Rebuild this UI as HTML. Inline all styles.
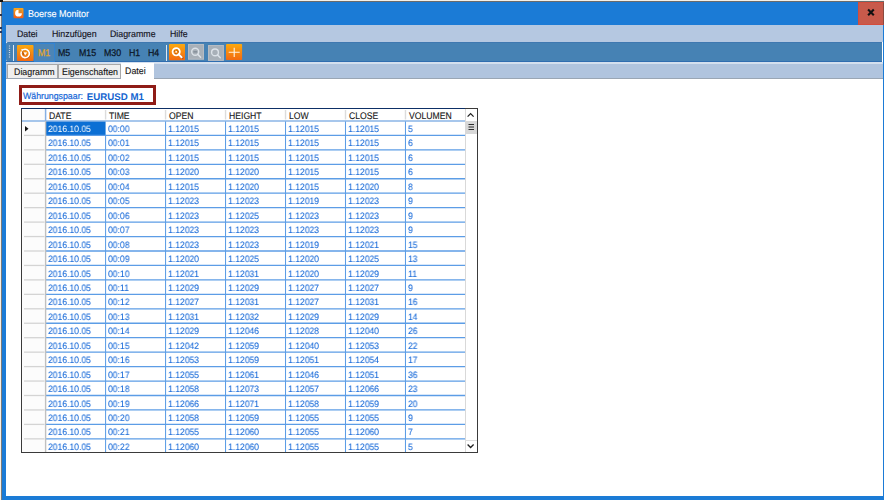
<!DOCTYPE html>
<html><head><meta charset="utf-8"><style>
html,body{margin:0;padding:0}
body{width:884px;height:500px;overflow:hidden;position:relative;background:#fff;font-family:"Liberation Sans",sans-serif;text-rendering:geometricPrecision}
.a{position:absolute}
#topstrip{left:0;top:0;width:884px;height:2px;background:#f4efe8}
#topline{left:1px;top:1px;width:883px;height:1px;background:#6b6b6b}
#corner{left:0;top:0;width:3px;height:2px;background:#111}
#leftstrip{left:0;top:0;width:2px;height:500px;background:#f5efe6}
#leftline{left:1px;top:1px;width:1px;height:499px;background:#7a7a7a}
#win{left:2px;top:2px;width:882px;height:498px;background:#1b7bd6}
#title{left:28px;top:8.6px;color:#fff;-webkit-text-stroke:0.1px #fff;font-size:9.7px;line-height:12px;white-space:nowrap;transform:scaleX(0.93);transform-origin:0 0}
#ticon{left:14px;top:8px;width:10px;height:10px;background:linear-gradient(#f79a2a,#f0641a);border-radius:1px}
#close{left:858px;top:2px;width:26px;height:23px;background:#c85a4b;box-sizing:border-box;border:1px solid #d44c3c;border-right-color:#8a4a40}
#client{left:6px;top:25px;width:877px;height:471px;background:#fff}
#menubar{left:6px;top:25px;width:877px;height:17px;background:#b5c8e1}
.menu{top:28.3px;font-size:9.4px;line-height:12px;color:#15151f;-webkit-text-stroke:0.15px #15151f;white-space:nowrap;transform:scaleX(0.94);transform-origin:0 0}
#toolbar{left:6px;top:42px;width:876px;height:20px;background:#4682b4;border-radius:3px 0 0 3px;box-shadow:inset 0 1px 0 #3f78b0}
#tstrip{left:6px;top:62px;width:877px;height:2px;background:#d3dfee}
#tabbg{left:6px;top:64px;width:877px;height:15px;background:#b0c4de}
#tabline{left:6px;top:78px;width:877px;height:1px;background:#9aa6b4}
.tab{top:64px;height:14px;background:#efefef;box-sizing:border-box;border:1px solid #a8a8a8;border-bottom:none}
.tabt{font-size:9.3px;line-height:12px;color:#161616;-webkit-text-stroke:0.12px #161616;white-space:nowrap;transform:scaleX(0.95);transform-origin:0 0}
#seltab{left:121px;top:63px;width:33px;height:17px;background:#fff}
.tb{top:49.1px;font-size:9.7px;text-rendering:geometricPrecision;line-height:10px;color:#0c1626;white-space:nowrap;font-weight:normal;-webkit-text-stroke:0.25px currentColor;transform:scaleX(0.91);transform-origin:0 0}
.btn{top:44px;width:16px;height:16px;border-radius:1px}
.orange{background:linear-gradient(#fca21c,#f26a10)}
.gray{background:#a3aebb}
#m1box{left:33.5px;top:42.5px;width:21.5px;height:19px;box-sizing:border-box;border:1.3px solid #3384d4;background:#4c85b6}
#redbox{left:19px;top:85px;width:137px;height:20px;box-sizing:border-box;border:3px solid #8f1c17;background:#fff}
#lbl{left:23px;top:91px;transform:scaleX(0.955);transform-origin:0 0;font-size:9.2px;line-height:10px;color:#1868d8;-webkit-text-stroke:0.22px #1868d8;white-space:nowrap}
#lblb{position:absolute;left:86.8px;top:92.8px;font-size:9.7px;line-height:10px;white-space:nowrap}
#lblb{font-weight:bold;color:#1464d0}
#grid{left:21px;top:108px;width:457px;height:345px;box-sizing:border-box;border:1px solid #3a3a3a;background:#fff}
#gtop{left:21px;top:108px;width:444px;height:1px;background:#0d2f66}
#rowhdr{left:22px;top:109px;width:23px;height:343px;background:#fcfcfc}
#hdrbg{left:46px;top:109px;width:419px;height:12px;background:#fff}
#hdrline{left:22px;top:120px;width:443px;height:2px;background:#9cc0ea}
#rhsep{left:45px;top:109px;width:1px;height:12px;background:#8ab4e6}
#rhsep2{left:45px;top:121px;width:1px;height:331px;background:#c4c4c4}
.hl{position:absolute;left:46px;width:419px;height:1px;background:#6aa2e2}
.rhl{position:absolute;left:24px;width:21px;height:1px;background:#dcdcdc}
.vl{position:absolute;top:121px;width:1px;height:331px;background:#6aa2e2}
.hsep{position:absolute;top:110px;width:1px;height:10px;background:#e2e2e2}
.hd{position:absolute;top:111.6px;transform:scaleX(0.90);transform-origin:0 0;font-size:9.6px;line-height:10px;color:#161616;-webkit-text-stroke:0.12px #161616;white-space:nowrap}
.cell{position:absolute;will-change:transform;transform:scaleX(0.935);transform-origin:0 0;font-size:9.2px;line-height:10px;color:#1b6cd9;-webkit-text-stroke:0.1px #1b6cd9;white-space:nowrap}
.cell.sel{color:#fff;-webkit-text-stroke:0px #fff}
.selbg{position:absolute;background:#0c6fd4}
#sbar{left:465px;top:109px;width:12px;height:343px;background:#fff;border-left:1px solid #d9d9d9;box-sizing:border-box}
#sthumb{left:465px;top:121px;width:12px;height:13px;background:#d8d8d8}

#tbline{left:6px;top:61px;width:876px;height:1px;background:#2f6db0}

</style></head><body>
<div class="a" id="topstrip"></div>
<div class="a" id="leftstrip"></div>
<div class="a" id="win"></div>
<div class="a" id="topline"></div>
<div class="a" id="leftline"></div>
<div class="a" id="corner"></div>
<div class="a" style="left:0;top:14px;width:2px;height:2px;background:#2a3550"></div>
<div class="a" style="left:0;top:27px;width:2px;height:2px;background:#243a66"></div>
<div class="a" style="left:0;top:31px;width:2px;height:2px;background:#243a66"></div>
<svg class="a" style="left:13px;top:8px" width="11" height="11" viewBox="0 0 11 11">
<defs><linearGradient id="go" x1="0" y1="0" x2="0" y2="1"><stop offset="0" stop-color="#f9a81c"/><stop offset="1" stop-color="#f25a12"/></linearGradient></defs>
<rect x="0.5" y="0" width="10" height="10.3" rx="1" fill="url(#go)"/>
<path d="M5.5 5.2 L5.5 1.8 A3.4 3.4 0 1 0 8.9 5.2 Z" fill="#fff"/>
<rect x="6.2" y="1.9" width="2.4" height="2.4" fill="#c98a3a"/>
</svg>
<div class="a" id="title">Boerse Monitor</div>
<div class="a" id="close"><svg width="24" height="21" style="position:absolute;left:0;top:0"><path d="M9.1 6.5 L14.8 12.2 M14.8 6.5 L9.1 12.2" stroke="#111" stroke-width="2.1"/></svg></div>
<div class="a" id="client"></div>
<div class="a" id="menubar"></div>
<div class="a menu" style="left:17px">Datei</div>
<div class="a menu" style="left:51.5px">Hinzufügen</div>
<div class="a menu" style="left:110px">Diagramme</div>
<div class="a menu" style="left:170px">Hilfe</div>
<div class="a" id="toolbar"></div>
<div class="a" id="tbline"></div>
<svg class="a" style="left:8px;top:45px" width="3" height="14"><path d="M1.5 0.5 V13.5" stroke="#c9d8ea" stroke-width="1.2" stroke-dasharray="1 1.2"/></svg>
<div class="a" style="left:13px;top:45px;width:1px;height:16px;background:#dfe8f2"></div>
<div class="a" id="m1box"></div>
<svg class="a" style="left:16.5px;top:44.5px" width="17" height="16" viewBox="0 0 17 16">
<defs><linearGradient id="go2" x1="0" y1="0" x2="0" y2="1"><stop offset="0" stop-color="#fca90e"/><stop offset="1" stop-color="#f26912"/></linearGradient></defs>
<rect x="0" y="0" width="16.5" height="16" rx="1" fill="url(#go2)"/>
<circle cx="8.7" cy="9" r="4.2" fill="none" stroke="#7a2e08" stroke-opacity="0.35" stroke-width="1.6"/>
<path d="M6.1 4.86 A4.2 4.2 0 1 1 4.56 6.4" fill="none" stroke="#fff" stroke-width="1.6"/>
<path d="M4.3 4.0 L7.0 4.3 L4.8 6.8 Z" fill="#fff"/>
<path d="M5.6 7.2 L7.2 10.2" stroke="#8a3208" stroke-opacity="0.6" stroke-width="1.2"/>
<path d="M6.6 7.3 L10.2 7.6 L8.1 10.6 Z" fill="#fff"/>
</svg>
<div class="a tb" style="left:38px;color:#e2a52c">M1</div>
<div class="a tb" style="left:58px">M5</div>
<div class="a tb" style="left:79px">M15</div>
<div class="a tb" style="left:103.8px">M30</div>
<div class="a tb" style="left:129px">H1</div>
<div class="a tb" style="left:148px">H4</div>
<div class="a" style="left:166px;top:45px;width:1px;height:16px;background:#dfe8f2"></div>
<svg class="a" style="left:168.8px;top:44.2px" width="16.5" height="16.5" viewBox="0 0 16.5 16.5">
<defs><linearGradient id="go3" x1="0" y1="0" x2="0" y2="1"><stop offset="0" stop-color="#fca90e"/><stop offset="1" stop-color="#f26912"/></linearGradient></defs>
<rect x="0" y="0" width="16.2" height="16.3" rx="1" fill="url(#go3)"/>
<path d="M9.8 10.2 L12.8 13.3" stroke="#6a2a08" stroke-opacity="0.4" stroke-width="2.2" stroke-linecap="round" transform="translate(0.7,0.7)"/>
<circle cx="7.2" cy="7.8" r="3.6" fill="none" stroke="#fff" stroke-width="1.8"/>
<path d="M9.8 10.4 L12.6 13.2" stroke="#fff" stroke-width="2" stroke-linecap="round"/>
<circle cx="7.2" cy="7.8" r="2" fill="none" stroke="#8a3a0a" stroke-opacity="0.7" stroke-width="1" stroke-dasharray="1.2 1.94" transform="rotate(-20 7.2 7.8)"/>
<circle cx="7.2" cy="7.8" r="0.9" fill="#fff"/>
</svg>
<svg class="a" style="left:187.8px;top:44.3px" width="16.5" height="16" viewBox="0 0 16.5 16">
<rect x="0" y="0" width="16" height="15.6" fill="#a8b0b8"/>
<rect x="0.5" y="0.5" width="15" height="14.6" fill="none" stroke="#b6bcc3" stroke-width="1"/>
<circle cx="7.2" cy="7.8" r="3.5" fill="none" stroke="#dce2e8" stroke-width="1.4"/>
<path d="M5.4 7.8 H9" stroke="#88929c" stroke-width="1.7"/>
<path d="M9.8 10.4 L12.6 13.2" stroke="#dce2e8" stroke-width="1.5" stroke-linecap="round"/>
</svg>
<svg class="a" style="left:207.5px;top:44.5px" width="16.5" height="16" viewBox="0 0 16.5 16">
<rect x="0" y="0" width="15.8" height="15.8" fill="#a8b0b8"/>
<rect x="0.5" y="0.5" width="14.8" height="14.8" fill="none" stroke="#b6bcc3" stroke-width="1"/>
<circle cx="7" cy="7.4" r="3.4" fill="none" stroke="#dce2e8" stroke-width="1.4"/>
<path d="M9.5 9.9 L12.3 12.8" stroke="#dce2e8" stroke-width="1.5" stroke-linecap="round"/>
</svg>
<svg class="a" style="left:226.3px;top:44.3px" width="16.5" height="16.5" viewBox="0 0 16.5 16.5">
<defs><linearGradient id="go4" x1="0" y1="0" x2="0" y2="1"><stop offset="0" stop-color="#fca90e"/><stop offset="1" stop-color="#f26912"/></linearGradient></defs>
<rect x="0" y="0" width="16.1" height="16.1" rx="1" fill="url(#go4)"/>
<path d="M2.7 8.2 H13.7 M8.2 3.7 V13" stroke="#fff" stroke-opacity="0.9" stroke-width="1.1"/>
</svg>
<div class="a" id="tstrip"></div>
<div class="a" id="tabbg"></div>
<div class="a" id="tabline"></div>
<div class="a tab" style="left:7px;width:51px"></div>
<div class="a tabt" style="left:13.5px;top:65.8px">Diagramm</div>
<div class="a tab" style="left:58px;width:63px"></div>
<div class="a tabt" style="left:62px;top:65.8px">Eigenschaften</div>
<div class="a" id="seltab"></div>
<div class="a tabt" style="left:125px;top:64.8px">Datei</div>
<div class="a" id="redbox"></div>
<div class="a" id="lbl">Währungspaar:</div><div id="lblb">EURUSD M1</div>
<div class="a" id="grid"></div>
<div class="a" id="gtop"></div>
<div class="a" id="rowhdr"></div>
<div class="a" id="hdrbg"></div>
<div class="a" id="sbar"></div>
<div class="a" id="sthumb"></div>
<svg class="a" style="left:465px;top:109px" width="12" height="343" viewBox="0 0 12 343">
<path d="M2.6 7.6 L5.6 4.6 L8.6 7.6" fill="none" stroke="#222" stroke-width="1.3"/>
<path d="M3.5 15.5 H9 M3.5 18 H9 M3.5 20.5 H9" stroke="#1a1a1a" stroke-width="0.9"/>
<rect x="0" y="331" width="12" height="1" fill="#dedede"/>
<path d="M2.6 335.5 L5.6 338.5 L8.6 335.5" fill="none" stroke="#222" stroke-width="1.3"/>
</svg>
<svg class="a" style="left:24px;top:125px" width="6" height="8"><path d="M1 1 L4.5 3.8 L1 6.6 Z" fill="#111"/></svg>
<svg class="a" style="left:0;top:0" width="884" height="500" viewBox="0 0 884 500">
<rect x="46" y="121" width="59.58" height="14.40" fill="#0c6fd4"/>
<line x1="46" y1="135.40" x2="465" y2="135.40" stroke="#5c9de6" stroke-width="1.3"/>
<line x1="24" y1="135.40" x2="44.5" y2="135.40" stroke="#d4d4d4" stroke-width="1.3"/>
<line x1="46" y1="149.85" x2="465" y2="149.85" stroke="#5c9de6" stroke-width="1.3"/>
<line x1="24" y1="149.85" x2="44.5" y2="149.85" stroke="#d4d4d4" stroke-width="1.3"/>
<line x1="46" y1="164.30" x2="465" y2="164.30" stroke="#5c9de6" stroke-width="1.3"/>
<line x1="24" y1="164.30" x2="44.5" y2="164.30" stroke="#d4d4d4" stroke-width="1.3"/>
<line x1="46" y1="178.75" x2="465" y2="178.75" stroke="#5c9de6" stroke-width="1.3"/>
<line x1="24" y1="178.75" x2="44.5" y2="178.75" stroke="#d4d4d4" stroke-width="1.3"/>
<line x1="46" y1="193.20" x2="465" y2="193.20" stroke="#5c9de6" stroke-width="1.3"/>
<line x1="24" y1="193.20" x2="44.5" y2="193.20" stroke="#d4d4d4" stroke-width="1.3"/>
<line x1="46" y1="207.65" x2="465" y2="207.65" stroke="#5c9de6" stroke-width="1.3"/>
<line x1="24" y1="207.65" x2="44.5" y2="207.65" stroke="#d4d4d4" stroke-width="1.3"/>
<line x1="46" y1="222.10" x2="465" y2="222.10" stroke="#5c9de6" stroke-width="1.3"/>
<line x1="24" y1="222.10" x2="44.5" y2="222.10" stroke="#d4d4d4" stroke-width="1.3"/>
<line x1="46" y1="236.55" x2="465" y2="236.55" stroke="#5c9de6" stroke-width="1.3"/>
<line x1="24" y1="236.55" x2="44.5" y2="236.55" stroke="#d4d4d4" stroke-width="1.3"/>
<line x1="46" y1="251.00" x2="465" y2="251.00" stroke="#5c9de6" stroke-width="1.3"/>
<line x1="24" y1="251.00" x2="44.5" y2="251.00" stroke="#d4d4d4" stroke-width="1.3"/>
<line x1="46" y1="265.45" x2="465" y2="265.45" stroke="#5c9de6" stroke-width="1.3"/>
<line x1="24" y1="265.45" x2="44.5" y2="265.45" stroke="#d4d4d4" stroke-width="1.3"/>
<line x1="46" y1="279.90" x2="465" y2="279.90" stroke="#5c9de6" stroke-width="1.3"/>
<line x1="24" y1="279.90" x2="44.5" y2="279.90" stroke="#d4d4d4" stroke-width="1.3"/>
<line x1="46" y1="294.35" x2="465" y2="294.35" stroke="#5c9de6" stroke-width="1.3"/>
<line x1="24" y1="294.35" x2="44.5" y2="294.35" stroke="#d4d4d4" stroke-width="1.3"/>
<line x1="46" y1="308.80" x2="465" y2="308.80" stroke="#5c9de6" stroke-width="1.3"/>
<line x1="24" y1="308.80" x2="44.5" y2="308.80" stroke="#d4d4d4" stroke-width="1.3"/>
<line x1="46" y1="323.25" x2="465" y2="323.25" stroke="#5c9de6" stroke-width="1.3"/>
<line x1="24" y1="323.25" x2="44.5" y2="323.25" stroke="#d4d4d4" stroke-width="1.3"/>
<line x1="46" y1="337.70" x2="465" y2="337.70" stroke="#5c9de6" stroke-width="1.3"/>
<line x1="24" y1="337.70" x2="44.5" y2="337.70" stroke="#d4d4d4" stroke-width="1.3"/>
<line x1="46" y1="352.15" x2="465" y2="352.15" stroke="#5c9de6" stroke-width="1.3"/>
<line x1="24" y1="352.15" x2="44.5" y2="352.15" stroke="#d4d4d4" stroke-width="1.3"/>
<line x1="46" y1="366.60" x2="465" y2="366.60" stroke="#5c9de6" stroke-width="1.3"/>
<line x1="24" y1="366.60" x2="44.5" y2="366.60" stroke="#d4d4d4" stroke-width="1.3"/>
<line x1="46" y1="381.05" x2="465" y2="381.05" stroke="#5c9de6" stroke-width="1.3"/>
<line x1="24" y1="381.05" x2="44.5" y2="381.05" stroke="#d4d4d4" stroke-width="1.3"/>
<line x1="46" y1="395.50" x2="465" y2="395.50" stroke="#5c9de6" stroke-width="1.3"/>
<line x1="24" y1="395.50" x2="44.5" y2="395.50" stroke="#d4d4d4" stroke-width="1.3"/>
<line x1="46" y1="409.95" x2="465" y2="409.95" stroke="#5c9de6" stroke-width="1.3"/>
<line x1="24" y1="409.95" x2="44.5" y2="409.95" stroke="#d4d4d4" stroke-width="1.3"/>
<line x1="46" y1="424.40" x2="465" y2="424.40" stroke="#5c9de6" stroke-width="1.3"/>
<line x1="24" y1="424.40" x2="44.5" y2="424.40" stroke="#d4d4d4" stroke-width="1.3"/>
<line x1="46" y1="438.85" x2="465" y2="438.85" stroke="#5c9de6" stroke-width="1.3"/>
<line x1="24" y1="438.85" x2="44.5" y2="438.85" stroke="#d4d4d4" stroke-width="1.3"/>
<line x1="105.58" y1="135.4" x2="105.58" y2="452" stroke="#5c9de6" stroke-width="1.05"/>
<line x1="105.58" y1="110" x2="105.58" y2="119.5" stroke="#dcdcdc" stroke-width="1.4"/>
<line x1="165.56" y1="121" x2="165.56" y2="452" stroke="#5c9de6" stroke-width="1.05"/>
<line x1="165.56" y1="110" x2="165.56" y2="119.5" stroke="#dcdcdc" stroke-width="1.4"/>
<line x1="225.54" y1="121" x2="225.54" y2="452" stroke="#5c9de6" stroke-width="1.05"/>
<line x1="225.54" y1="110" x2="225.54" y2="119.5" stroke="#dcdcdc" stroke-width="1.4"/>
<line x1="285.52" y1="121" x2="285.52" y2="452" stroke="#5c9de6" stroke-width="1.05"/>
<line x1="285.52" y1="110" x2="285.52" y2="119.5" stroke="#dcdcdc" stroke-width="1.4"/>
<line x1="345.50" y1="121" x2="345.50" y2="452" stroke="#5c9de6" stroke-width="1.05"/>
<line x1="345.50" y1="110" x2="345.50" y2="119.5" stroke="#dcdcdc" stroke-width="1.4"/>
<line x1="405.48" y1="121" x2="405.48" y2="452" stroke="#5c9de6" stroke-width="1.05"/>
<line x1="405.48" y1="110" x2="405.48" y2="119.5" stroke="#dcdcdc" stroke-width="1.4"/>
<line x1="22" y1="121" x2="465" y2="121" stroke="#8ab4e6" stroke-width="1.3"/>
<line x1="45.60" y1="109" x2="45.60" y2="121" stroke="#86b0e4" stroke-width="1.5"/>
<line x1="45.60" y1="121" x2="45.60" y2="452" stroke="#c0c0c0" stroke-width="1.4"/>
</svg>
<div class="hd" style="left:49.10px">DATE</div>
<div class="hd" style="left:109.08px">TIME</div>
<div class="hd" style="left:169.06px">OPEN</div>
<div class="hd" style="left:229.04px">HEIGHT</div>
<div class="hd" style="left:289.02px">LOW</div>
<div class="hd" style="left:349.00px">CLOSE</div>
<div class="hd" style="left:408.98px">VOLUMEN</div>
<div class="cell sel" style="left:48.10px;top:124.00px">2016.10.05</div>
<div class="cell" style="left:108.08px;top:124.00px">00:00</div>
<div class="cell" style="left:168.06px;top:124.00px">1.12015</div>
<div class="cell" style="left:228.04px;top:124.00px">1.12015</div>
<div class="cell" style="left:288.02px;top:124.00px">1.12015</div>
<div class="cell" style="left:348.00px;top:124.00px">1.12015</div>
<div class="cell" style="left:407.98px;top:124.00px">5</div>
<div class="cell" style="left:48.10px;top:138.45px">2016.10.05</div>
<div class="cell" style="left:108.08px;top:138.45px">00:01</div>
<div class="cell" style="left:168.06px;top:138.45px">1.12015</div>
<div class="cell" style="left:228.04px;top:138.45px">1.12015</div>
<div class="cell" style="left:288.02px;top:138.45px">1.12015</div>
<div class="cell" style="left:348.00px;top:138.45px">1.12015</div>
<div class="cell" style="left:407.98px;top:138.45px">6</div>
<div class="cell" style="left:48.10px;top:152.90px">2016.10.05</div>
<div class="cell" style="left:108.08px;top:152.90px">00:02</div>
<div class="cell" style="left:168.06px;top:152.90px">1.12015</div>
<div class="cell" style="left:228.04px;top:152.90px">1.12015</div>
<div class="cell" style="left:288.02px;top:152.90px">1.12015</div>
<div class="cell" style="left:348.00px;top:152.90px">1.12015</div>
<div class="cell" style="left:407.98px;top:152.90px">6</div>
<div class="cell" style="left:48.10px;top:167.35px">2016.10.05</div>
<div class="cell" style="left:108.08px;top:167.35px">00:03</div>
<div class="cell" style="left:168.06px;top:167.35px">1.12020</div>
<div class="cell" style="left:228.04px;top:167.35px">1.12020</div>
<div class="cell" style="left:288.02px;top:167.35px">1.12015</div>
<div class="cell" style="left:348.00px;top:167.35px">1.12015</div>
<div class="cell" style="left:407.98px;top:167.35px">6</div>
<div class="cell" style="left:48.10px;top:181.80px">2016.10.05</div>
<div class="cell" style="left:108.08px;top:181.80px">00:04</div>
<div class="cell" style="left:168.06px;top:181.80px">1.12015</div>
<div class="cell" style="left:228.04px;top:181.80px">1.12020</div>
<div class="cell" style="left:288.02px;top:181.80px">1.12015</div>
<div class="cell" style="left:348.00px;top:181.80px">1.12020</div>
<div class="cell" style="left:407.98px;top:181.80px">8</div>
<div class="cell" style="left:48.10px;top:196.25px">2016.10.05</div>
<div class="cell" style="left:108.08px;top:196.25px">00:05</div>
<div class="cell" style="left:168.06px;top:196.25px">1.12023</div>
<div class="cell" style="left:228.04px;top:196.25px">1.12023</div>
<div class="cell" style="left:288.02px;top:196.25px">1.12019</div>
<div class="cell" style="left:348.00px;top:196.25px">1.12023</div>
<div class="cell" style="left:407.98px;top:196.25px">9</div>
<div class="cell" style="left:48.10px;top:210.70px">2016.10.05</div>
<div class="cell" style="left:108.08px;top:210.70px">00:06</div>
<div class="cell" style="left:168.06px;top:210.70px">1.12023</div>
<div class="cell" style="left:228.04px;top:210.70px">1.12025</div>
<div class="cell" style="left:288.02px;top:210.70px">1.12023</div>
<div class="cell" style="left:348.00px;top:210.70px">1.12023</div>
<div class="cell" style="left:407.98px;top:210.70px">9</div>
<div class="cell" style="left:48.10px;top:225.15px">2016.10.05</div>
<div class="cell" style="left:108.08px;top:225.15px">00:07</div>
<div class="cell" style="left:168.06px;top:225.15px">1.12023</div>
<div class="cell" style="left:228.04px;top:225.15px">1.12023</div>
<div class="cell" style="left:288.02px;top:225.15px">1.12023</div>
<div class="cell" style="left:348.00px;top:225.15px">1.12023</div>
<div class="cell" style="left:407.98px;top:225.15px">9</div>
<div class="cell" style="left:48.10px;top:239.60px">2016.10.05</div>
<div class="cell" style="left:108.08px;top:239.60px">00:08</div>
<div class="cell" style="left:168.06px;top:239.60px">1.12023</div>
<div class="cell" style="left:228.04px;top:239.60px">1.12023</div>
<div class="cell" style="left:288.02px;top:239.60px">1.12019</div>
<div class="cell" style="left:348.00px;top:239.60px">1.12021</div>
<div class="cell" style="left:407.98px;top:239.60px">15</div>
<div class="cell" style="left:48.10px;top:254.05px">2016.10.05</div>
<div class="cell" style="left:108.08px;top:254.05px">00:09</div>
<div class="cell" style="left:168.06px;top:254.05px">1.12020</div>
<div class="cell" style="left:228.04px;top:254.05px">1.12025</div>
<div class="cell" style="left:288.02px;top:254.05px">1.12020</div>
<div class="cell" style="left:348.00px;top:254.05px">1.12025</div>
<div class="cell" style="left:407.98px;top:254.05px">13</div>
<div class="cell" style="left:48.10px;top:268.50px">2016.10.05</div>
<div class="cell" style="left:108.08px;top:268.50px">00:10</div>
<div class="cell" style="left:168.06px;top:268.50px">1.12021</div>
<div class="cell" style="left:228.04px;top:268.50px">1.12031</div>
<div class="cell" style="left:288.02px;top:268.50px">1.12020</div>
<div class="cell" style="left:348.00px;top:268.50px">1.12029</div>
<div class="cell" style="left:407.98px;top:268.50px">11</div>
<div class="cell" style="left:48.10px;top:282.95px">2016.10.05</div>
<div class="cell" style="left:108.08px;top:282.95px">00:11</div>
<div class="cell" style="left:168.06px;top:282.95px">1.12029</div>
<div class="cell" style="left:228.04px;top:282.95px">1.12029</div>
<div class="cell" style="left:288.02px;top:282.95px">1.12027</div>
<div class="cell" style="left:348.00px;top:282.95px">1.12027</div>
<div class="cell" style="left:407.98px;top:282.95px">9</div>
<div class="cell" style="left:48.10px;top:297.40px">2016.10.05</div>
<div class="cell" style="left:108.08px;top:297.40px">00:12</div>
<div class="cell" style="left:168.06px;top:297.40px">1.12027</div>
<div class="cell" style="left:228.04px;top:297.40px">1.12031</div>
<div class="cell" style="left:288.02px;top:297.40px">1.12027</div>
<div class="cell" style="left:348.00px;top:297.40px">1.12031</div>
<div class="cell" style="left:407.98px;top:297.40px">16</div>
<div class="cell" style="left:48.10px;top:311.85px">2016.10.05</div>
<div class="cell" style="left:108.08px;top:311.85px">00:13</div>
<div class="cell" style="left:168.06px;top:311.85px">1.12031</div>
<div class="cell" style="left:228.04px;top:311.85px">1.12032</div>
<div class="cell" style="left:288.02px;top:311.85px">1.12029</div>
<div class="cell" style="left:348.00px;top:311.85px">1.12029</div>
<div class="cell" style="left:407.98px;top:311.85px">14</div>
<div class="cell" style="left:48.10px;top:326.30px">2016.10.05</div>
<div class="cell" style="left:108.08px;top:326.30px">00:14</div>
<div class="cell" style="left:168.06px;top:326.30px">1.12029</div>
<div class="cell" style="left:228.04px;top:326.30px">1.12046</div>
<div class="cell" style="left:288.02px;top:326.30px">1.12028</div>
<div class="cell" style="left:348.00px;top:326.30px">1.12040</div>
<div class="cell" style="left:407.98px;top:326.30px">26</div>
<div class="cell" style="left:48.10px;top:340.75px">2016.10.05</div>
<div class="cell" style="left:108.08px;top:340.75px">00:15</div>
<div class="cell" style="left:168.06px;top:340.75px">1.12042</div>
<div class="cell" style="left:228.04px;top:340.75px">1.12059</div>
<div class="cell" style="left:288.02px;top:340.75px">1.12040</div>
<div class="cell" style="left:348.00px;top:340.75px">1.12053</div>
<div class="cell" style="left:407.98px;top:340.75px">22</div>
<div class="cell" style="left:48.10px;top:355.20px">2016.10.05</div>
<div class="cell" style="left:108.08px;top:355.20px">00:16</div>
<div class="cell" style="left:168.06px;top:355.20px">1.12053</div>
<div class="cell" style="left:228.04px;top:355.20px">1.12059</div>
<div class="cell" style="left:288.02px;top:355.20px">1.12051</div>
<div class="cell" style="left:348.00px;top:355.20px">1.12054</div>
<div class="cell" style="left:407.98px;top:355.20px">17</div>
<div class="cell" style="left:48.10px;top:369.65px">2016.10.05</div>
<div class="cell" style="left:108.08px;top:369.65px">00:17</div>
<div class="cell" style="left:168.06px;top:369.65px">1.12055</div>
<div class="cell" style="left:228.04px;top:369.65px">1.12061</div>
<div class="cell" style="left:288.02px;top:369.65px">1.12046</div>
<div class="cell" style="left:348.00px;top:369.65px">1.12051</div>
<div class="cell" style="left:407.98px;top:369.65px">36</div>
<div class="cell" style="left:48.10px;top:384.10px">2016.10.05</div>
<div class="cell" style="left:108.08px;top:384.10px">00:18</div>
<div class="cell" style="left:168.06px;top:384.10px">1.12058</div>
<div class="cell" style="left:228.04px;top:384.10px">1.12073</div>
<div class="cell" style="left:288.02px;top:384.10px">1.12057</div>
<div class="cell" style="left:348.00px;top:384.10px">1.12066</div>
<div class="cell" style="left:407.98px;top:384.10px">23</div>
<div class="cell" style="left:48.10px;top:398.55px">2016.10.05</div>
<div class="cell" style="left:108.08px;top:398.55px">00:19</div>
<div class="cell" style="left:168.06px;top:398.55px">1.12066</div>
<div class="cell" style="left:228.04px;top:398.55px">1.12071</div>
<div class="cell" style="left:288.02px;top:398.55px">1.12058</div>
<div class="cell" style="left:348.00px;top:398.55px">1.12059</div>
<div class="cell" style="left:407.98px;top:398.55px">20</div>
<div class="cell" style="left:48.10px;top:413.00px">2016.10.05</div>
<div class="cell" style="left:108.08px;top:413.00px">00:20</div>
<div class="cell" style="left:168.06px;top:413.00px">1.12058</div>
<div class="cell" style="left:228.04px;top:413.00px">1.12059</div>
<div class="cell" style="left:288.02px;top:413.00px">1.12055</div>
<div class="cell" style="left:348.00px;top:413.00px">1.12055</div>
<div class="cell" style="left:407.98px;top:413.00px">9</div>
<div class="cell" style="left:48.10px;top:427.45px">2016.10.05</div>
<div class="cell" style="left:108.08px;top:427.45px">00:21</div>
<div class="cell" style="left:168.06px;top:427.45px">1.12055</div>
<div class="cell" style="left:228.04px;top:427.45px">1.12060</div>
<div class="cell" style="left:288.02px;top:427.45px">1.12055</div>
<div class="cell" style="left:348.00px;top:427.45px">1.12060</div>
<div class="cell" style="left:407.98px;top:427.45px">7</div>
<div class="cell" style="left:48.10px;top:441.90px">2016.10.05</div>
<div class="cell" style="left:108.08px;top:441.90px">00:22</div>
<div class="cell" style="left:168.06px;top:441.90px">1.12060</div>
<div class="cell" style="left:228.04px;top:441.90px">1.12060</div>
<div class="cell" style="left:288.02px;top:441.90px">1.12055</div>
<div class="cell" style="left:348.00px;top:441.90px">1.12055</div>
<div class="cell" style="left:407.98px;top:441.90px">5</div>
</body></html>
